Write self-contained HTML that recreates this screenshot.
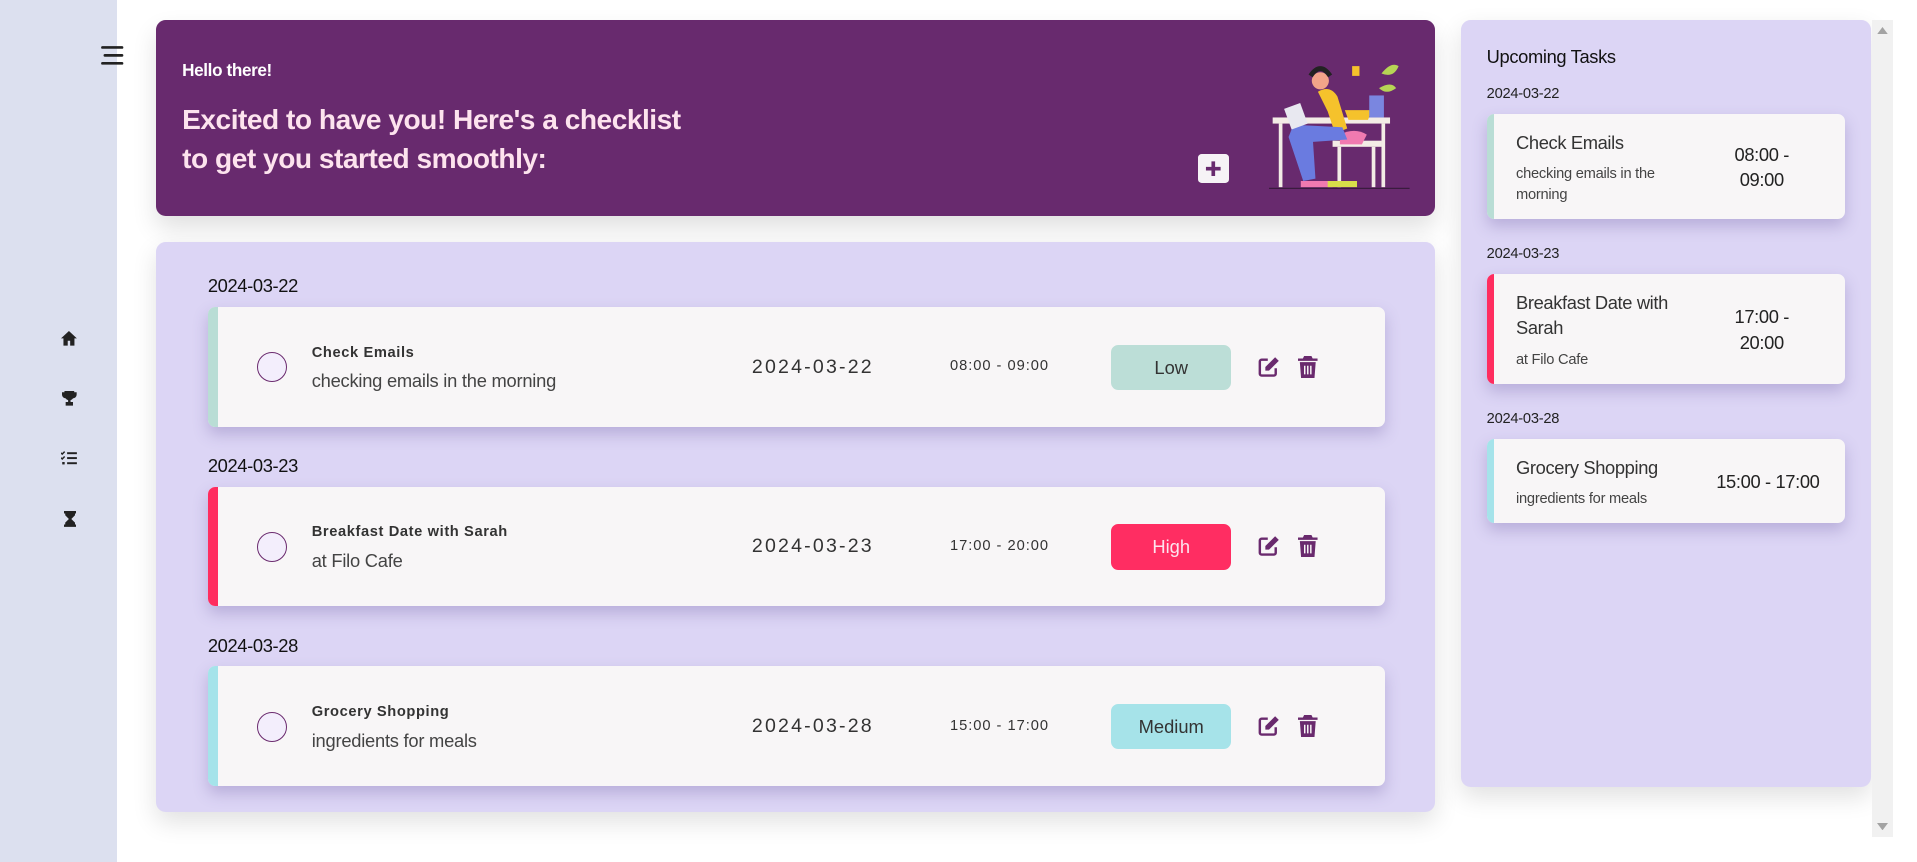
<!DOCTYPE html>
<html><head><meta charset="utf-8">
<style>
html,body{margin:0;padding:0;background:#fff;overflow:hidden}
#root{zoom:1.2226;width:1568px;height:705px;position:relative;font-family:"Liberation Sans",sans-serif;color:#222}
.abs{position:absolute}
.side{left:0;top:0;width:96px;height:705px;background:#dce0ef}
.hero{left:128px;top:16px;width:1046px;height:161px;background:#682a6e;border-radius:8px;box-shadow:0 10px 20px rgba(0,0,0,.12)}
.panel{background:#dcd5f5;border-radius:8px;box-shadow:0 8px 20px rgba(0,0,0,.12)}
.card{position:absolute;left:42px;width:963px;height:98px;background:#f8f6f7;border-radius:6px;box-shadow:0 6px 12px rgba(80,60,140,.25);overflow:hidden}
.card .bar{position:absolute;left:0;top:0;bottom:0;width:8px}
.circ{position:absolute;left:40px;top:37px;width:23px;height:23px;border:1px solid #6a2a6e;border-radius:50%;background:#f3eefc}
.t{position:absolute;left:85px;top:31px;font-size:12px;font-weight:bold;letter-spacing:.5px;color:#333}
.d{position:absolute;left:85px;top:52px;font-size:15px;color:#444;letter-spacing:-.2px}
.dt{position:absolute;left:445px;top:40px;font-size:16px;letter-spacing:1.8px;color:#333}
.tm{position:absolute;left:607px;top:42px;font-size:12px;letter-spacing:.8px;color:#333}
.bd{position:absolute;left:739px;top:31px;width:98px;height:37px;border-radius:6px;font-size:15px;text-align:center;line-height:37px}
.ic{position:absolute;top:40px}
.dl{position:absolute;left:42px;font-size:15px;color:#111;letter-spacing:-.3px}
.uc{position:absolute;left:21px;width:293px;background:#f8f6f7;border-radius:6px;box-shadow:0 6px 12px rgba(80,60,140,.25);overflow:hidden}
.uc .bar{position:absolute;left:0;top:0;bottom:0;width:6px}
.ut{position:absolute;left:24px;font-size:15px;color:#333;line-height:21px;letter-spacing:-.3px}
.ud{position:absolute;left:24px;font-size:12px;color:#444;line-height:17px;letter-spacing:-.2px}
.utm{position:absolute;left:180px;width:90px;text-align:center;font-size:15px;color:#222;line-height:21px;letter-spacing:-.3px}
.udl{position:absolute;left:21px;font-size:12px;color:#222;letter-spacing:-.2px}
</style></head><body><div id="root">
<div class="abs side"></div>
<svg class="abs" style="left:82px;top:37px" width="20" height="17" viewBox="0 0 20 17"><g stroke="#222" stroke-width="2.2" stroke-linecap="round"><line x1="2" y1="2" x2="18" y2="2"/><line x1="4" y1="8.5" x2="18" y2="8.5"/><line x1="2" y1="15" x2="18" y2="15"/></g></svg>
<svg class="abs" style="left:50px;top:271px" width="13" height="12" viewBox="0 0 13 12"><path d="M6.5 0L0 6h2v6h3.5V8h2v4H11V6h2z" fill="#222"/></svg>
<svg class="abs" style="left:51px;top:320px" width="12" height="12" viewBox="0 0 12 12"><path d="M2 0h8v1h2v2a3 3 0 0 1-3 3 3.5 3.5 0 0 1-2 1.5V9h2v3H3V9h2V7.5A3.5 3.5 0 0 1 3 6 3 3 0 0 1 0 3V1h2z" fill="#222"/></svg>
<svg class="abs" style="left:50px;top:369px" width="13" height="12" viewBox="0 0 13 12"><g fill="#222"><path d="M0 1.5l1 1 2-2" stroke="#222" fill="none" stroke-width="1.2"/><rect x="5" y="1" width="8" height="1.6"/><path d="M0 5.5l1 1 2-2" stroke="#222" fill="none" stroke-width="1.2"/><rect x="5" y="5" width="8" height="1.6"/><rect x="1" y="9" width="2" height="2"/><rect x="5" y="9.2" width="8" height="1.6"/></g></svg>
<svg class="abs" style="left:52px;top:418px" width="10" height="13" viewBox="0 0 10 13"><path d="M0 0h10v2H9v1.5L6 6.5l3 3V11h1v2H0v-2h1V9.5l3-3-3-3V2H0z" fill="#222"/></svg>

<div class="abs hero">
 <div class="abs" style="left:21px;top:34px;color:#fff;font-size:14px;font-weight:bold;letter-spacing:-.3px">Hello there!</div>
 <div class="abs" style="left:21px;top:66px;color:#fde3ee;font-size:23px;font-weight:bold;line-height:32px;letter-spacing:-.4px">Excited to have you! Here's a checklist<br>to get you started smoothly:</div>
 <div class="abs" style="left:852px;top:110px;width:25px;height:24px;background:#f6f3f6;border-radius:3px"><svg width="25" height="24"><path d="M12.5 6v12M6.5 12h12" stroke="#682a6e" stroke-width="3"/></svg></div>
 <svg class="abs" style="left:910px;top:24px" width="115" height="115" viewBox="0 0 115 115">
  <rect x="3" y="56" width="96" height="5" fill="#f3ece6"/>
  <rect x="8" y="61" width="3" height="52" fill="#f3ece6"/><rect x="92" y="61" width="3" height="52" fill="#f3ece6"/>
  <rect x="52" y="75" width="40" height="5" fill="#f3ece6"/><rect x="56" y="80" width="3" height="33" fill="#f3ece6"/><rect x="84" y="80" width="3" height="33" fill="#f3ece6"/>
  <path d="M58 70q12-6 22 0l-4 8H58z" fill="#f07ab0"/>
  <path d="M40 35q10-6 16 4l8 26-10 4-6-18z" fill="#f5c22c"/>
  <path d="M20 62l40 2 4 10-28 2 2 30-10 2-12-36z" fill="#6a7be0"/>
  <circle cx="42" cy="26" r="7" fill="#f2a489"/><path d="M34 22q8-12 16 0" stroke="#222" stroke-width="4" fill="none"/>
  <rect x="15" y="46" width="14" height="18" fill="#e8e8f0" transform="rotate(-20 22 55)"/>
  <path d="M62 50h22l-3 8H65z" fill="#f5c22c"/><rect x="82" y="38" width="12" height="18" fill="#7a86e0"/>
  <path d="M92 20q8-10 14-6-4 10-14 6zM90 32q10-6 14 0-8 6-14 0z" fill="#b6d455"/>
  <rect x="68" y="14" width="6" height="8" fill="#f5c22c"/>
  <path d="M26 108h26v5H26z" fill="#f07ab0"/><path d="M48 108h24v5H48z" fill="#d8e04a"/>
  <line x1="0" y1="114" x2="115" y2="114" stroke="#3a1b3e"/>
 </svg>
</div>

<div class="abs panel" style="left:128px;top:198px;width:1046px;height:466px">
 <div class="dl" style="top:27px">2024-03-22</div>
 <div class="card" style="top:53px"><div class="bar" style="background:#b9ddd5"></div><div class="circ"></div>
  <div class="t">Check Emails</div><div class="d">checking emails in the morning</div>
  <div class="dt">2024-03-22</div><div class="tm">08:00 - 09:00</div>
  <div class="bd" style="background:#bcded7;color:#333">Low</div>
  <svg class="ic" style="left:859px" width="18" height="18" viewBox="0 0 18 18"><path d="M8 3H3a1.5 1.5 0 0 0-1.5 1.5v10A1.5 1.5 0 0 0 3 16h10a1.5 1.5 0 0 0 1.5-1.5V10" stroke="#6a2a6e" stroke-width="2" fill="none"/><path d="M14 1l3 3-8 8H6V9z" fill="#6a2a6e"/></svg>
  <svg class="ic" style="left:892px" width="16" height="18" viewBox="0 0 16 18"><path d="M5 0h6l1 2h4v2H0V2h4zM1.5 5h13l-1 13h-11z" fill="#6a2a6e"/><path d="M5.5 8v7M8 8v7M10.5 8v7" stroke="#f8f6f7" stroke-width="1.2"/></svg>
 </div>
 <div class="dl" style="top:174px">2024-03-23</div>
 <div class="card" style="top:200px"><div class="bar" style="background:#ff2d5f"></div><div class="circ"></div>
  <div class="t">Breakfast Date with Sarah</div><div class="d">at Filo Cafe</div>
  <div class="dt">2024-03-23</div><div class="tm">17:00 - 20:00</div>
  <div class="bd" style="background:#ff2d62;color:#fde3ee">High</div>
  <svg class="ic" style="left:859px" width="18" height="18" viewBox="0 0 18 18"><path d="M8 3H3a1.5 1.5 0 0 0-1.5 1.5v10A1.5 1.5 0 0 0 3 16h10a1.5 1.5 0 0 0 1.5-1.5V10" stroke="#6a2a6e" stroke-width="2" fill="none"/><path d="M14 1l3 3-8 8H6V9z" fill="#6a2a6e"/></svg>
  <svg class="ic" style="left:892px" width="16" height="18" viewBox="0 0 16 18"><path d="M5 0h6l1 2h4v2H0V2h4zM1.5 5h13l-1 13h-11z" fill="#6a2a6e"/><path d="M5.5 8v7M8 8v7M10.5 8v7" stroke="#f8f6f7" stroke-width="1.2"/></svg>
 </div>
 <div class="dl" style="top:321px">2024-03-28</div>
 <div class="card" style="top:347px"><div class="bar" style="background:#a5e3ea"></div><div class="circ"></div>
  <div class="t">Grocery Shopping</div><div class="d">ingredients for meals</div>
  <div class="dt">2024-03-28</div><div class="tm">15:00 - 17:00</div>
  <div class="bd" style="background:#a6e3e9;color:#333">Medium</div>
  <svg class="ic" style="left:859px" width="18" height="18" viewBox="0 0 18 18"><path d="M8 3H3a1.5 1.5 0 0 0-1.5 1.5v10A1.5 1.5 0 0 0 3 16h10a1.5 1.5 0 0 0 1.5-1.5V10" stroke="#6a2a6e" stroke-width="2" fill="none"/><path d="M14 1l3 3-8 8H6V9z" fill="#6a2a6e"/></svg>
  <svg class="ic" style="left:892px" width="16" height="18" viewBox="0 0 16 18"><path d="M5 0h6l1 2h4v2H0V2h4zM1.5 5h13l-1 13h-11z" fill="#6a2a6e"/><path d="M5.5 8v7M8 8v7M10.5 8v7" stroke="#f8f6f7" stroke-width="1.2"/></svg>
 </div>
</div>

<div class="abs panel" style="left:1195px;top:16px;width:335px;height:628px">
 <div class="abs" style="left:21px;top:22px;font-size:15px;color:#111;letter-spacing:-.3px">Upcoming Tasks</div>
 <div class="udl" style="top:54px">2024-03-22</div>
 <div class="uc" style="top:77px;height:86px"><div class="bar" style="background:#b9ddd5"></div>
  <div class="ut" style="top:13px">Check Emails</div><div class="ud" style="top:41px">checking emails in the<br>morning</div>
  <div class="utm" style="top:23px">08:00 -<br>09:00</div></div>
 <div class="udl" style="top:185px">2024-03-23</div>
 <div class="uc" style="top:208px;height:90px"><div class="bar" style="background:#ff2d5f"></div>
  <div class="ut" style="top:13px">Breakfast Date with<br>Sarah</div><div class="ud" style="top:62px">at Filo Cafe</div>
  <div class="utm" style="top:25px">17:00 -<br>20:00</div></div>
 <div class="udl" style="top:320px">2024-03-28</div>
 <div class="uc" style="top:343px;height:69px"><div class="bar" style="background:#a5e3ea"></div>
  <div class="ut" style="top:13px">Grocery Shopping</div><div class="ud" style="top:41px">ingredients for meals</div>
  <div class="utm" style="top:25px;left:180px;width:100px">15:00 - 17:00</div></div>
</div>

<div class="abs" style="left:1531px;top:16px;width:17px;height:669px;background:#f1f1f1"></div>
<svg class="abs" style="left:1535px;top:22px" width="9" height="6"><path d="M0 6L4.5 0 9 6z" fill="#a3a3a3"/></svg>
<svg class="abs" style="left:1535px;top:673px" width="9" height="6"><path d="M0 0L4.5 6 9 0z" fill="#a3a3a3"/></svg>
</div></body></html>
